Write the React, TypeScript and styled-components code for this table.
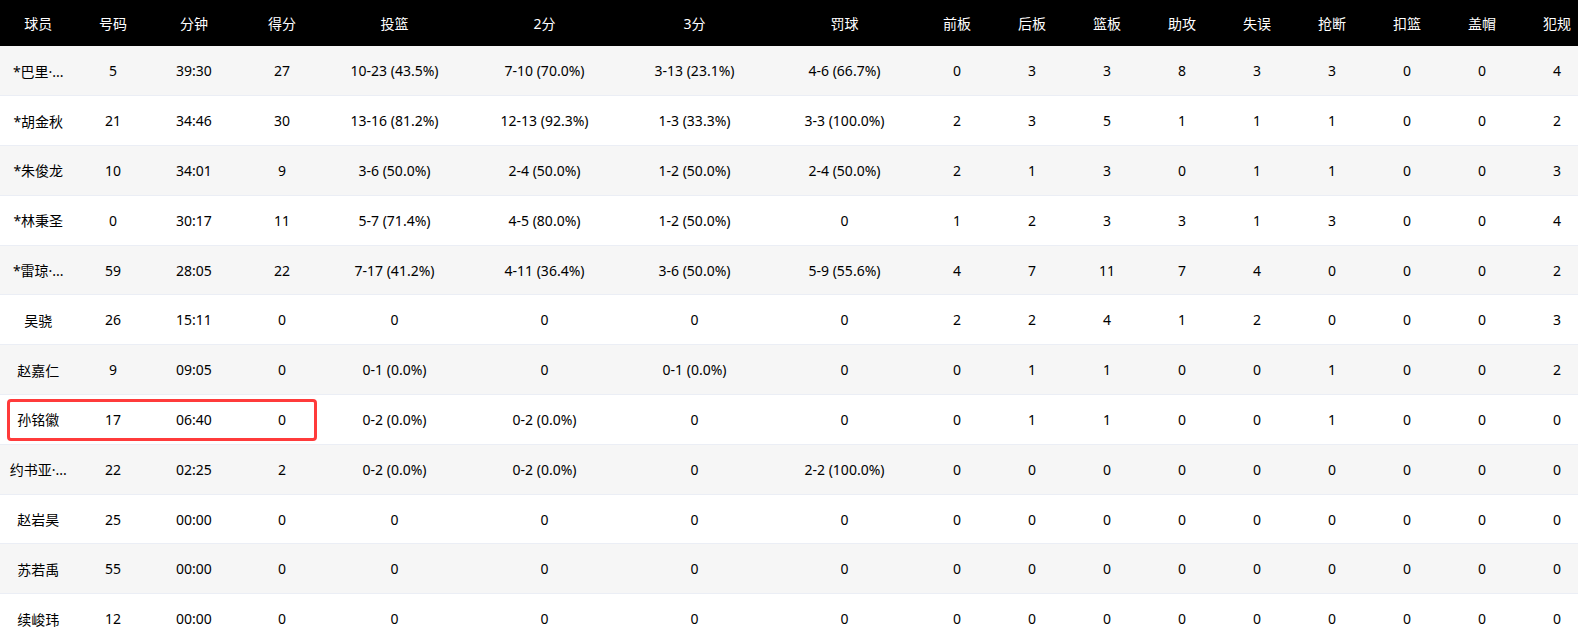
import React from "react";
import styled, { createGlobalStyle } from "styled-components";

const GlobalStyle = createGlobalStyle`
  html, body {
    margin: 0;
    padding: 0;
    background: #fff;
    overflow: hidden;
  }
  body {
    font-family: "Noto Sans", "Noto Sans CJK SC", sans-serif;
  }
`;

const Wrap = styled.div`
  position: relative;
  width: 1594.5px;
`;

const Table = styled.table`
  width: 1594.5px;
  table-layout: fixed;
  border-collapse: collapse;
  font-size: 14px;
  color: #000;
`;

const HeadCell = styled.th<{ $first?: boolean }>`
  height: 46px;
  padding: 0 ${(p) => (p.$first ? "6px" : "0")} 0 0;
  background: #000;
  color: #fff;
  font-weight: normal;
  text-align: center;
  white-space: nowrap;
`;

const Row = styled.tr<{ $striped: boolean }>`
  height: 49.8px;
  background: ${(p) => (p.$striped ? "#f6f6f6" : "#fff")};
  border-bottom: 1px solid #ebeef5;
`;

const Cell = styled.td<{ $first?: boolean }>`
  padding: 0 ${(p) => (p.$first ? "6px" : "0")} 0 0;
  text-align: center;
  white-space: nowrap;
  overflow: hidden;
`;

// 红框高亮（覆盖在表格上）
const Highlight = styled.div`
  position: absolute;
  left: 7px;
  top: 399px;
  width: 310px;
  height: 42px;
  box-sizing: border-box;
  border: 3px solid #ff3b3b;
  border-radius: 4px;
  pointer-events: none;
`;

const widths = [82.5, 61, 101, 75, 150, 150, 150, 150, 75, 75, 75, 75, 75, 75, 75, 75, 75];

const headers = [
  "球员", "号码", "分钟", "得分", "投篮", "2分", "3分", "罚球",
  "前板", "后板", "篮板", "助攻", "失误", "抢断", "扣篮", "盖帽", "犯规",
];

const rows: string[][] = [
  ["*巴里·...", "5", "39:30", "27", "10-23 (43.5%)", "7-10 (70.0%)", "3-13 (23.1%)", "4-6 (66.7%)", "0", "3", "3", "8", "3", "3", "0", "0", "4"],
  ["*胡金秋", "21", "34:46", "30", "13-16 (81.2%)", "12-13 (92.3%)", "1-3 (33.3%)", "3-3 (100.0%)", "2", "3", "5", "1", "1", "1", "0", "0", "2"],
  ["*朱俊龙", "10", "34:01", "9", "3-6 (50.0%)", "2-4 (50.0%)", "1-2 (50.0%)", "2-4 (50.0%)", "2", "1", "3", "0", "1", "1", "0", "0", "3"],
  ["*林秉圣", "0", "30:17", "11", "5-7 (71.4%)", "4-5 (80.0%)", "1-2 (50.0%)", "0", "1", "2", "3", "3", "1", "3", "0", "0", "4"],
  ["*雷琼·...", "59", "28:05", "22", "7-17 (41.2%)", "4-11 (36.4%)", "3-6 (50.0%)", "5-9 (55.6%)", "4", "7", "11", "7", "4", "0", "0", "0", "2"],
  ["吴骁", "26", "15:11", "0", "0", "0", "0", "0", "2", "2", "4", "1", "2", "0", "0", "0", "3"],
  ["赵嘉仁", "9", "09:05", "0", "0-1 (0.0%)", "0", "0-1 (0.0%)", "0", "0", "1", "1", "0", "0", "1", "0", "0", "2"],
  ["孙铭徽", "17", "06:40", "0", "0-2 (0.0%)", "0-2 (0.0%)", "0", "0", "0", "1", "1", "0", "0", "1", "0", "0", "0"],
  ["约书亚·...", "22", "02:25", "2", "0-2 (0.0%)", "0-2 (0.0%)", "0", "2-2 (100.0%)", "0", "0", "0", "0", "0", "0", "0", "0", "0"],
  ["赵岩昊", "25", "00:00", "0", "0", "0", "0", "0", "0", "0", "0", "0", "0", "0", "0", "0", "0"],
  ["苏若禹", "55", "00:00", "0", "0", "0", "0", "0", "0", "0", "0", "0", "0", "0", "0", "0", "0"],
  ["续峻玮", "12", "00:00", "0", "0", "0", "0", "0", "0", "0", "0", "0", "0", "0", "0", "0", "0"],
];

const App = () => {
  return (
    <>
      <GlobalStyle />
      <Wrap>
        <Table>
          <colgroup>
            {widths.map((w, i) => (
              <col key={i} style={{ width: w }} />
            ))}
          </colgroup>
          <thead>
            <tr>
              {headers.map((h, i) => (
                <HeadCell key={h} $first={i === 0}>
                  {h}
                </HeadCell>
              ))}
            </tr>
          </thead>
          <tbody>
            {rows.map((r, ri) => (
              <Row key={ri} $striped={ri % 2 === 0}>
                {r.map((v, ci) => (
                  <Cell key={ci} $first={ci === 0}>
                    {v}
                  </Cell>
                ))}
              </Row>
            ))}
          </tbody>
        </Table>
        <Highlight />
      </Wrap>
    </>
  );
};

export default App;
